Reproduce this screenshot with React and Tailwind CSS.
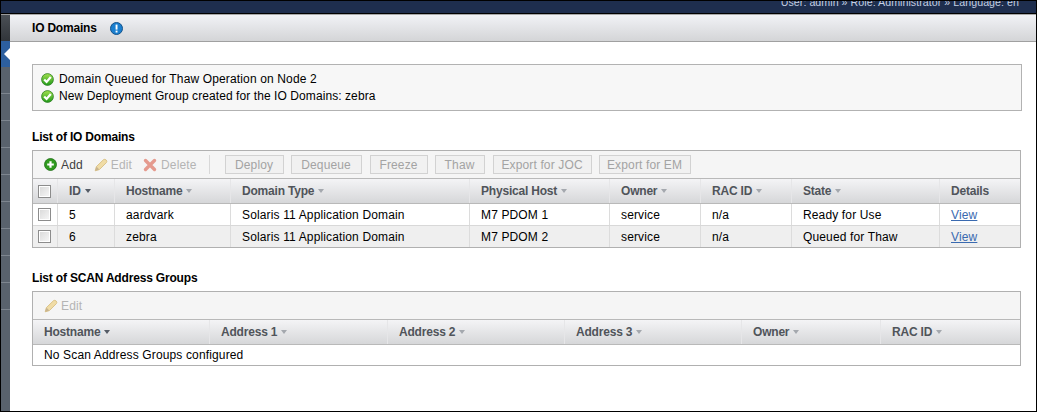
import React from "react";

const Check = () => (
  <svg width="13" height="13" viewBox="0 0 13 13" className="shrink-0">
    <defs>
      <linearGradient id="gc" x1="0" y1="0" x2="0" y2="1">
        <stop offset="0" stopColor="#a2e04e" />
        <stop offset="1" stopColor="#1f9a1a" />
      </linearGradient>
    </defs>
    <circle cx="6.5" cy="6.5" r="5.9" fill="url(#gc)" stroke="#2f7f25" strokeWidth="0.8" />
    <path d="M3.2 6.4 L5.6 8.9 L9.8 4" fill="none" stroke="#fff" strokeWidth="2.2" />
  </svg>
);

const Info = () => (
  <svg width="13" height="13" viewBox="0 0 13 13">
    <circle cx="6.5" cy="6.5" r="6" fill="#1b7fcf" stroke="#14528a" strokeWidth="1" />
    <rect x="5.6" y="2.6" width="1.9" height="5" fill="#fff" />
    <rect x="5.6" y="8.6" width="1.9" height="1.9" fill="#fff" />
  </svg>
);

const Plus = () => (
  <svg width="13" height="13" viewBox="0 0 13 13">
    <circle cx="6.5" cy="6.5" r="6" fill="#2f9a1e" stroke="#1f6e16" strokeWidth="0.8" />
    <path d="M6.5 3.2 V9.8 M3.2 6.5 H9.8" stroke="#fff" strokeWidth="2.2" />
  </svg>
);

const Pencil = () => (
  <svg width="14" height="14" viewBox="0 0 14 14">
    <path d="M1.2 12.8 L2.4 8.6 L9.6 1.6 Q10.8 0.8 12.2 2 Q13.4 3.4 12.4 4.6 L5.4 11.6 Z" fill="#f0dca6" stroke="#d8bf82" strokeWidth="0.9" />
    <path d="M1.2 12.8 L2.4 8.6 L5.4 11.6 Z" fill="#c9b58f" />
  </svg>
);

const Cross = () => (
  <svg width="14" height="14" viewBox="0 0 14 14">
    <path d="M2.5 2.5 L11.5 11.5 M11.5 2.5 L2.5 11.5" stroke="#e59a8e" strokeWidth="3.4" strokeLinecap="round" />
  </svg>
);

const Sort = ({ dark }) => (
  <span className={`inline-block ml-[4px] align-middle w-0 h-0 border-x-[3.5px] border-x-transparent border-t-[4px] ${dark ? "border-t-[#555c66]" : "border-t-[#a4a8ae]"}`} />
);

const Box = () => (
  <span className="block w-[13px] h-[13px] border border-[#8c8c8c] bg-gradient-to-br from-[#d8d8d8] to-[#f8f8f8] shadow-[inset_0_0_0_1px_#fff]" />
);

const Btn = ({ w, children }) => (
  <span className={`flex h-[19px] items-center justify-center border border-[#d2d2d2] bg-[#f1f1f1] text-[#a3a3a3] ${w}`}>
    {children}
  </span>
);

const Head = ({ children, className = "" }) => (
  <div className={`flex items-center border-r border-[#e6e6e8] pl-[11px] font-bold tracking-[-0.2px] text-[#50545a] ${className}`}>
    {children}
  </div>
);

const Cell = ({ children, className = "" }) => (
  <div className={`flex items-center border-r border-[#dcdcdc] pl-[11px] text-black ${className}`}>{children}</div>
);

const cols = "grid-cols-[25px_57px_116px_239px_140px_91px_91px_148px_1fr]";

const Row = ({ id, host, phys, state, alt }) => (
  <div className={`grid ${cols} ${alt ? "h-[21px] bg-[#efefef]" : "h-[22px] border-b border-[#d8d8d8] bg-white"}`}>
    <div className="flex items-center border-r border-[#dcdcdc] pl-[5px]"><Box /></div>
    <Cell>{id}</Cell>
    <Cell>{host}</Cell>
    <Cell>Solaris 11 Application Domain</Cell>
    <Cell>{phys}</Cell>
    <Cell>service</Cell>
    <Cell>n/a</Cell>
    <Cell>{state}</Cell>
    <div className="flex items-center pl-[11px]">
      <span className="text-[#3a6ab0] underline">View</span>
    </div>
  </div>
);

const headBg = "bg-gradient-to-b from-[#f4f4f6] to-[#d6d7d9] border-y border-[#b9b9b9]";

export default function App() {
  return (
    <div
      className="flex h-[412px] w-[1037px] flex-col overflow-hidden border border-black bg-white text-[12px] leading-[14px] tracking-[0.14px]"
      style={{ fontFamily: '"Liberation Sans", Arial, sans-serif' }}
    >
      <div className="flex h-[12px] shrink-0 justify-end overflow-hidden bg-[#1e2e4e] pr-[17px] text-[10.67px] tracking-[0.04px] text-[#c3cfe2]">
        <span className="-mt-[6px]">User: admin » Role: Administrator » Language: en</span>
      </div>
      <div className="h-px shrink-0 bg-black" />
      <div className="flex min-h-0 flex-1">
        <div className="flex w-[9px] shrink-0 flex-col bg-[#59626d]">
          <div className="h-[27px] border-t border-[#9a9a9a] bg-gradient-to-b from-[#4a4f55] to-[#31353a]" />
          <div className="relative h-[26px] bg-[#2d5f9f]">
            <span className="absolute right-0 top-[7px] h-0 w-0 border-y-[6px] border-r-[6px] border-y-transparent border-r-white" />
          </div>
          <div className="h-[27px] border-b border-[#7d858f]" />
          <div className="h-[27px] border-b border-[#7d858f]" />
          <div className="h-[27px] border-b border-[#7d858f]" />
          <div className="h-[27px] border-b border-[#7d858f]" />
          <div className="h-[27px] border-b border-[#7d858f]" />
          <div className="h-[27px] border-b border-[#7d858f]" />
          <div className="h-[27px] border-b border-[#7d858f]" />
          <div className="h-[27px] border-b border-[#7d858f]" />
          <div className="h-[27px] border-b border-[#7d858f]" />
        </div>
        <div className="flex min-w-0 flex-1 flex-col">
          <div className="flex h-[28px] shrink-0 items-center border-t border-b border-t-[#a8a8a8] border-b-[#a0a0a0] bg-gradient-to-b from-[#f1f2f6] to-[#d4d5d7] pl-[22px]">
            <span className="font-bold tracking-[-0.2px] text-black">IO Domains</span>
            <span className="ml-[13px] flex"><Info /></span>
          </div>

          <div className="flex flex-1 flex-col pl-[22px] pr-[14px] pt-[22px]">
            <div className="flex h-[47px] flex-col justify-center gap-[3px] border border-[#b2b2b2] bg-[#f7f7f7] pl-[8px]">
              <div className="flex items-center gap-[5px]"><Check />Domain Queued for Thaw Operation on Node 2</div>
              <div className="flex items-center gap-[5px] tracking-[0.08px]"><Check />New Deployment Group created for the IO Domains: zebra</div>
            </div>

            <h2 className="mt-[19px] h-[14px] font-bold tracking-[-0.18px] text-black">List of IO Domains</h2>
            <div className="mt-[6px] mr-px border border-[#b0b0b0]">
              <div className="flex h-[27px] items-center bg-[#f5f5f5] pl-[11px]">
                <span className="flex items-center gap-[4px] text-[#404040]"><Plus />Add</span>
                <span className="ml-[11px] flex items-center gap-[3px] text-[#b4b4b4]"><Pencil />Edit</span>
                <span className="ml-[11px] flex items-center gap-[4px] text-[#b4b4b4]"><Cross />Delete</span>
                <span className="ml-[12px] h-[19px] w-px bg-[#d8d8d8]" />
                <div className="ml-[15px] flex gap-[7px]">
                  <Btn w="w-[59px]">Deploy</Btn>
                  <Btn w="w-[71px]">Dequeue</Btn>
                  <Btn w="ml-px w-[58px]">Freeze</Btn>
                  <Btn w="w-[50px]">Thaw</Btn>
                  <Btn w="ml-px w-[99px]">Export for JOC</Btn>
                  <Btn w="w-[92px]">Export for EM</Btn>
                </div>
              </div>
              <div className={`grid h-[26px] ${cols} ${headBg}`}>
                <div className="flex items-center border-r border-[#e6e6e8] pl-[5px]"><Box /></div>
                <Head>ID<Sort dark /></Head>
                <Head>Hostname<Sort /></Head>
                <Head>Domain Type<Sort /></Head>
                <Head>Physical Host<Sort /></Head>
                <Head>Owner<Sort /></Head>
                <Head>RAC ID<Sort /></Head>
                <Head>State<Sort /></Head>
                <Head className="border-r-0">Details</Head>
              </div>
              <Row id="5" host="aardvark" phys="M7 PDOM 1" state="Ready for Use" />
              <Row id="6" host="zebra" phys="M7 PDOM 2" state="Queued for Thaw" alt />
            </div>

            <h2 className="mt-[23px] h-[14px] font-bold tracking-[-0.18px] text-black">List of SCAN Address Groups</h2>
            <div className="mt-[6px] mr-px border border-[#b0b0b0]">
              <div className="flex h-[27px] items-center bg-[#f5f5f5] pl-[11px] text-[#b4b4b4]">
                <span className="flex items-center gap-[3px]"><Pencil />Edit</span>
              </div>
              <div className={`grid h-[26px] grid-cols-[177px_178px_177px_177px_139px_1fr] ${headBg}`}>
                <Head>Hostname<Sort dark /></Head>
                <Head>Address 1<Sort /></Head>
                <Head>Address 2<Sort /></Head>
                <Head>Address 3<Sort /></Head>
                <Head>Owner<Sort /></Head>
                <Head className="border-r-0">RAC ID<Sort /></Head>
              </div>
              <div className="flex h-[20px] items-center pl-[11px] text-black">No Scan Address Groups configured</div>
            </div>
          </div>
        </div>
      </div>
    </div>
  );
}
